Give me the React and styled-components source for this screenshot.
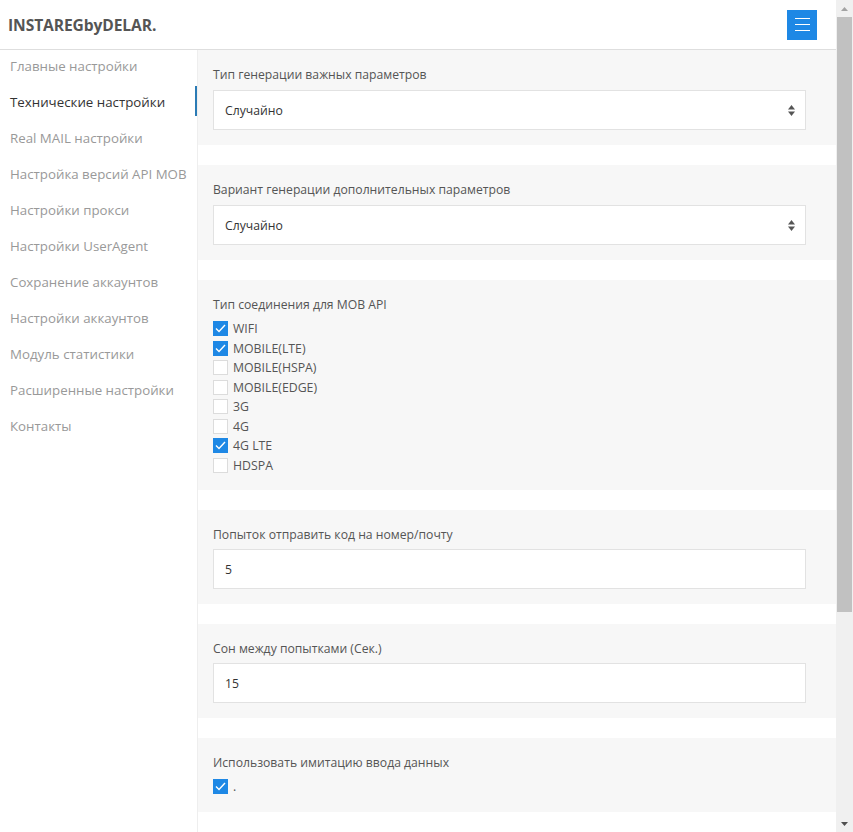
import React from "react";
import styled, { createGlobalStyle } from "styled-components";

const GlobalStyle = createGlobalStyle`
  html, body {
    margin: 0;
    padding: 0;
    background: #fff;
    font-family: "Open Sans", "Liberation Sans", sans-serif;
    font-size: 13px;
    color: #333;
    overflow: hidden;
  }
`;

const Frame = styled.div`
  display: flex;
  height: 100vh;
`;

const Page = styled.div`
  flex: 1;
  min-width: 0;
  height: 100vh;
  overflow: hidden;
  display: flex;
  flex-direction: column;
`;

// fake browser scrollbar, drawn at the right edge of the window
const Scrollbar = styled.div`
  width: 17px;
  flex-shrink: 0;
  background: #f0f0f0;
  display: flex;
  flex-direction: column;
  align-items: center;
`;

const ScrollArrow = styled.div`
  height: 17px;
  width: 100%;
  display: flex;
  align-items: center;
  justify-content: center;
`;

const Thumb = styled.div`
  width: 15px;
  height: 595px;
  background: #c1c1c1;
`;

const Track = styled.div`
  flex: 1;
`;

const Header = styled.header`
  height: 49px;
  flex-shrink: 0;
  border-bottom: 1px solid #dedede;
  display: flex;
  align-items: center;
  justify-content: space-between;
  padding: 0 19px 0 8px;
`;

const Logo = styled.div`
  font-weight: 700;
  font-size: 15.6px;
  color: #555;
  letter-spacing: -0.1px;
`;

const MenuButton = styled.button`
  width: 30px;
  height: 30px;
  border: none;
  padding: 0;
  background: #1e88e5;
  display: flex;
  flex-direction: column;
  align-items: center;
  justify-content: center;
  gap: 5px;
  span {
    display: block;
    width: 15px;
    height: 1px;
    background: #fff;
  }
`;

const Body = styled.div`
  display: flex;
  flex: 1;
`;

const Sidebar = styled.nav`
  width: 197px;
  flex-shrink: 0;
  border-right: 1px solid #eee;
`;

const NavItem = styled.div`
  position: relative;
  height: 36px;
  line-height: 33px;
  padding-left: 10px;
  font-size: 13.3px;
  white-space: nowrap;
  overflow: hidden;
  color: ${(p) => (p.$active ? "#333" : "#999")};
  &::after {
    content: "";
    display: ${(p) => (p.$active ? "block" : "none")};
    position: absolute;
    right: 0;
    top: 0;
    width: 2px;
    height: 30px;
    background: #2b7bb5;
  }
`;

const Main = styled.main`
  flex: 1;
`;

const Section = styled.section`
  background: #f7f7f7;
  padding: 16px 30px 15px 15px;
  margin-bottom: 20px;
`;

const Label = styled.div`
  color: #555;
  font-size: 12.2px;
  line-height: 18px;
  margin-bottom: ${(p) => p.$gap || 6}px;
`;

const Field = styled.div`
  height: 40px;
  box-sizing: border-box;
  border: 1px solid #e2e2e2;
  background: #fff;
  display: flex;
  align-items: center;
  justify-content: space-between;
  padding: 0 10px 0 11px;
  color: #333;
  font-size: 12.2px;
`;

const Row = styled.div`
  display: flex;
  align-items: center;
  height: 19.5px;
  gap: 5px;
  color: #555;
  font-size: 12.3px;
`;

const Box = styled.span`
  width: 15px;
  height: 15px;
  flex-shrink: 0;
  box-sizing: border-box;
  background: ${(p) => (p.$checked ? "#1e88e5" : "#fff")};
  border: ${(p) => (p.$checked ? "none" : "1px solid #dcdcdc")};
  display: flex;
  align-items: center;
  justify-content: center;
`;

const Check = ({ checked }) => (
  <Box $checked={checked}>
    {checked && (
      <svg width="11" height="9" viewBox="0 0 11 9">
        <path d="M1 4.5 L4 7.5 L10 1" fill="none" stroke="#fff" strokeWidth="1.4" />
      </svg>
    )}
  </Box>
);

const Arrows = () => (
  <svg width="7" height="11" viewBox="0 0 7 11">
    <path d="M3.5 0 L7 4.5 L0 4.5 Z" fill="#555" />
    <path d="M0 6.5 L7 6.5 L3.5 11 Z" fill="#555" />
  </svg>
);

const nav = [
  "Главные настройки",
  "Технические настройки",
  "Real MAIL настройки",
  "Настройка версий API MOB",
  "Настройки прокси",
  "Настройки UserAgent",
  "Сохранение аккаунтов",
  "Настройки аккаунтов",
  "Модуль статистики",
  "Расширенные настройки",
  "Контакты",
];

const conn = [
  ["WIFI", true],
  ["MOBILE(LTE)", true],
  ["MOBILE(HSPA)", false],
  ["MOBILE(EDGE)", false],
  ["3G", false],
  ["4G", false],
  ["4G LTE", true],
  ["HDSPA", false],
];

export default function App() {
  return (
    <Frame>
      <GlobalStyle />
      <Page>
        <Header>
          <Logo>INSTAREGbyDELAR.</Logo>
          <MenuButton>
            <span />
            <span />
            <span />
          </MenuButton>
        </Header>
        <Body>
          <Sidebar>
            {nav.map((n, i) => (
              <NavItem key={n} $active={i === 1}>
                {n}
              </NavItem>
            ))}
          </Sidebar>
          <Main>
            <Section>
              <Label>Тип генерации важных параметров</Label>
              <Field>
                Случайно
                <Arrows />
              </Field>
            </Section>
            <Section>
              <Label>Вариант генерации дополнительных параметров</Label>
              <Field>
                Случайно
                <Arrows />
              </Field>
            </Section>
            <Section>
              <Label $gap={5}>Тип соединения для MOB API</Label>
              {conn.map(([t, c]) => (
                <Row key={t}>
                  <Check checked={c} />
                  {t}
                </Row>
              ))}
            </Section>
            <Section>
              <Label $gap={5}>Попыток отправить код на номер/почту</Label>
              <Field>5</Field>
            </Section>
            <Section>
              <Label $gap={5}>Сон между попытками (Сек.)</Label>
              <Field>15</Field>
            </Section>
            <Section>
              <Label $gap={5}>Использовать имитацию ввода данных</Label>
              <Row>
                <Check checked />.
              </Row>
            </Section>
          </Main>
        </Body>
      </Page>
      <Scrollbar>
        <ScrollArrow>
          <svg width="7" height="4" viewBox="0 0 7 4">
            <path d="M0 4 L3.5 0 L7 4 Z" fill="#a3a3a3" />
          </svg>
        </ScrollArrow>
        <Thumb />
        <Track />
        <ScrollArrow>
          <svg width="7" height="4" viewBox="0 0 7 4">
            <path d="M0 0 L7 0 L3.5 4 Z" fill="#505050" />
          </svg>
        </ScrollArrow>
      </Scrollbar>
    </Frame>
  );
}
